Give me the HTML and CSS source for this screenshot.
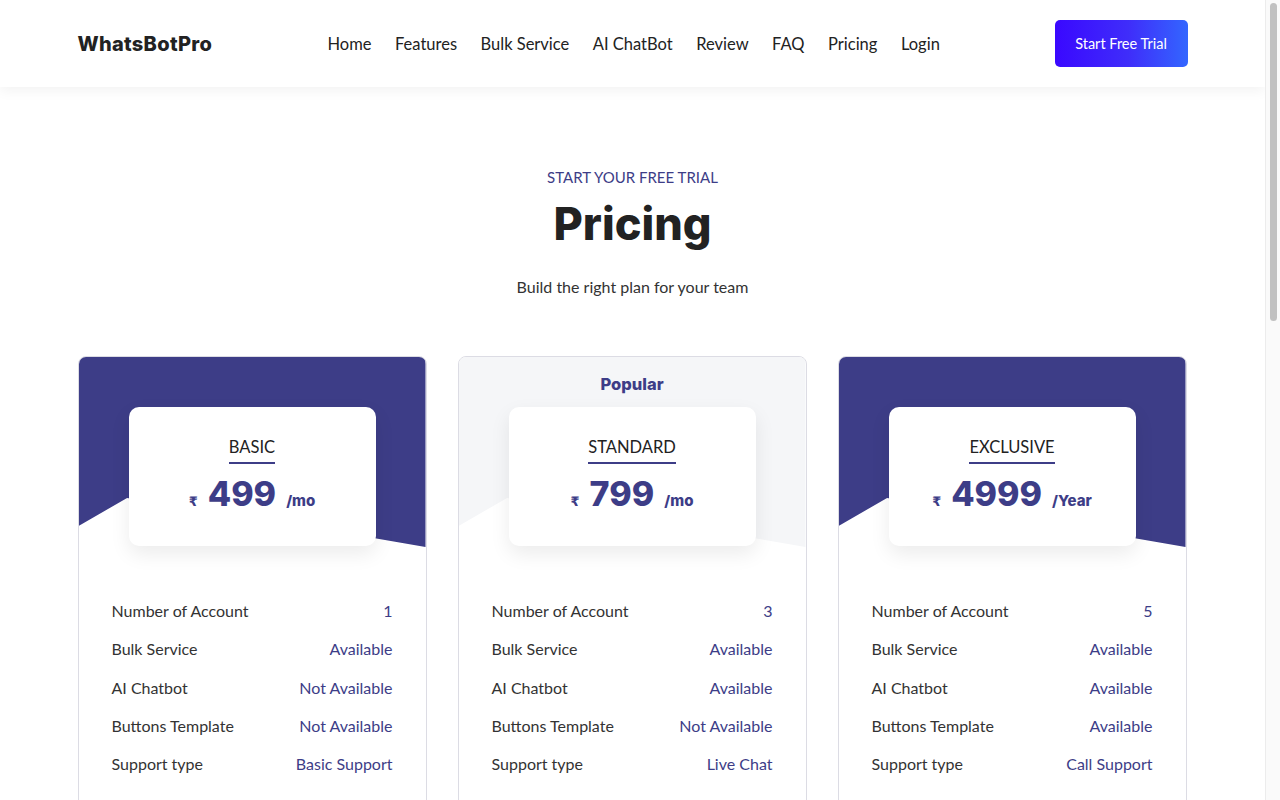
FILE: index.html
```html
<!DOCTYPE html>
<html lang="en">
<head>
<meta charset="utf-8">
<title>WhatsBotPro - Pricing</title>
<link rel="stylesheet" href="styles.css">
</head>
<body>
<header class="site-header">
  <div class="container header-inner">
    <a class="logo" href="#">WhatsBotPro</a>
    <nav class="nav">
      <a href="#">Home</a>
      <a href="#">Features</a>
      <a href="#">Bulk Service</a>
      <a href="#">AI ChatBot</a>
      <a href="#">Review</a>
      <a href="#">FAQ</a>
      <a href="#">Pricing</a>
      <a href="#">Login</a>
    </nav>
    <a class="btn-trial" href="#">Start Free Trial</a>
  </div>
</header>

<section class="pricing">
  <div class="container">
    <div class="section-head">
      <p class="eyebrow">START YOUR FREE TRIAL</p>
      <h1 class="title">Pricing</h1>
      <p class="subtitle">Build the right plan for your team</p>
    </div>

    <div class="plans">
      <div class="plan">
        <div class="plan-top"></div>
        <div class="plan-box">
          <h3 class="plan-name">BASIC</h3>
          <div class="plan-price"><span class="cur">₹</span><span class="amt">499</span><span class="per">/mo</span></div>
        </div>
        <ul class="features">
          <li><span>Number of Account</span><span class="val">1</span></li>
          <li><span>Bulk Service</span><span class="val">Available</span></li>
          <li><span>AI Chatbot</span><span class="val">Not Available</span></li>
          <li><span>Buttons Template</span><span class="val">Not Available</span></li>
          <li><span>Support type</span><span class="val">Basic Support</span></li>
        </ul>
      </div>

      <div class="plan popular">
        <div class="plan-top"></div>
        <p class="popular-label">Popular</p>
        <div class="plan-box">
          <h3 class="plan-name">STANDARD</h3>
          <div class="plan-price"><span class="cur">₹</span><span class="amt">799</span><span class="per">/mo</span></div>
        </div>
        <ul class="features">
          <li><span>Number of Account</span><span class="val">3</span></li>
          <li><span>Bulk Service</span><span class="val">Available</span></li>
          <li><span>AI Chatbot</span><span class="val">Available</span></li>
          <li><span>Buttons Template</span><span class="val">Not Available</span></li>
          <li><span>Support type</span><span class="val">Live Chat</span></li>
        </ul>
      </div>

      <div class="plan">
        <div class="plan-top"></div>
        <div class="plan-box">
          <h3 class="plan-name">EXCLUSIVE</h3>
          <div class="plan-price"><span class="cur">₹</span><span class="amt">4999</span><span class="per">/Year</span></div>
        </div>
        <ul class="features">
          <li><span>Number of Account</span><span class="val">5</span></li>
          <li><span>Bulk Service</span><span class="val">Available</span></li>
          <li><span>AI Chatbot</span><span class="val">Available</span></li>
          <li><span>Buttons Template</span><span class="val">Available</span></li>
          <li><span>Support type</span><span class="val">Call Support</span></li>
        </ul>
      </div>
    </div>
  </div>
</section>

<div class="scrollbar" aria-hidden="true"><div class="scrollbar-thumb"></div></div>
</body>
</html>
```

FILE: styles.css
```css
* { box-sizing: border-box; }
html, body { margin: 0; padding: 0; }
body {
  font-family: Lato, "Noto Sans", sans-serif;
  color: #333;
  background: #fff;
  min-height: 2000px;
  padding-right: 15px;
}
a { text-decoration: none; color: inherit; }

/* page scrollbar as shown in the reference */
.scrollbar {
  position: fixed;
  top: 0; right: 0; bottom: 0;
  width: 15px;
  background: #fafafa;
  border-left: 1px solid #ececec;
  z-index: 10;
}
.scrollbar-thumb {
  margin: 3px 3px 0 4px;
  height: 318px;
  background: #c1c1c1;
  border-radius: 4px;
}

.container {
  width: 1110px;
  margin: 0 auto;
}

.site-header {
  height: 87px;
  background: #fff;
  box-shadow: 0 4px 12px rgba(0, 0, 0, 0.05);
  position: relative;
  z-index: 2;
}
.header-inner {
  height: 87px;
  display: flex;
  align-items: center;
}
.logo {
  font-family: Inter, "DejaVu Sans", sans-serif;
  font-weight: 800;
  font-size: 20px;
  color: #222;
  letter-spacing: 0.3px;
  width: 250px;
}
.nav {
  display: flex;
  gap: 23.5px;
  font-size: 16.5px;
  color: #222;
}
.btn-trial {
  margin-left: auto;
  width: 133px;
  height: 47px;
  border-radius: 5px;
  background: linear-gradient(90deg, #3a08ff 0%, #3f2dfa 55%, #3366ff 100%);
  color: #fff;
  font-size: 14.5px;
  display: flex;
  align-items: center;
  justify-content: center;
}

.pricing { padding-top: 80px; }
.section-head { text-align: center; }
.eyebrow {
  margin: 0;
  font-size: 15px;
  color: #3d3d87;
  line-height: 20px;
}
.title {
  margin: 10px 0 0;
  font-family: Inter, "DejaVu Sans", sans-serif;
  font-weight: 800;
  font-size: 45px;
  line-height: 54px;
  color: #222;
}
.subtitle {
  margin: 25px 0 0;
  font-size: 16px;
  color: #333;
  line-height: 22px;
}

.plans {
  margin-top: 58px;
  display: grid;
  grid-template-columns: repeat(3, 349px);
  gap: 31px;
}
.plan {
  position: relative;
  border: 1px solid #dcdce4;
  border-radius: 8px;
  overflow: hidden;
  padding: 50px 0 0;
  background: #fff;
  min-height: 480px;
}
.plan-top {
  position: absolute;
  left: 0; top: 0; right: 0;
  height: 200px;
  background: #3d3d87;
  clip-path: polygon(0 0, 100% 0, 100% 190px, 85% 181px, 14% 141px, 0 169px);
}
.popular .plan-top { background: #f5f6f8; }
.popular-label {
  position: absolute;
  left: 0; right: 0; top: 17px;
  margin: 0;
  text-align: center;
  font-family: Inter, "DejaVu Sans", sans-serif;
  font-weight: 800;
  font-size: 16.5px;
  color: #3d3d87;
}
.plan-box {
  position: relative;
  margin: 0 50px;
  height: 139px;
  background: #fff;
  border-radius: 10px;
  box-shadow: 0 8px 20px rgba(0, 0, 0, 0.08);
  text-align: center;
  padding-top: 29px;
}
.plan-name {
  display: inline-block;
  margin: 0;
  font-weight: 400;
  font-size: 16.5px;
  color: #222;
  line-height: 22px;
  padding-bottom: 4px;
  border-bottom: 2px solid #3d3d87;
}
.plan-price {
  margin-top: 8px;
  color: #3d3d87;
  font-family: Inter, "DejaVu Sans", sans-serif;
  font-weight: 800;
  display: flex;
  justify-content: center;
  align-items: baseline;
}
.cur { font-size: 13px; margin-right: 10px; font-family: "DejaVu Sans", sans-serif; font-weight: 700; }
.amt { font-size: 34px; line-height: 44px; }
.per { font-size: 15px; margin-left: 10px; }

.features {
  list-style: none;
  margin: 0;
  padding: 54px 33px 0 33px;
}
.features li {
  display: flex;
  justify-content: space-between;
  font-size: 16px;
  color: #333;
  line-height: 22px;
  margin-bottom: 16.3px;
}
.features .val { color: #3d3d87; }
```
